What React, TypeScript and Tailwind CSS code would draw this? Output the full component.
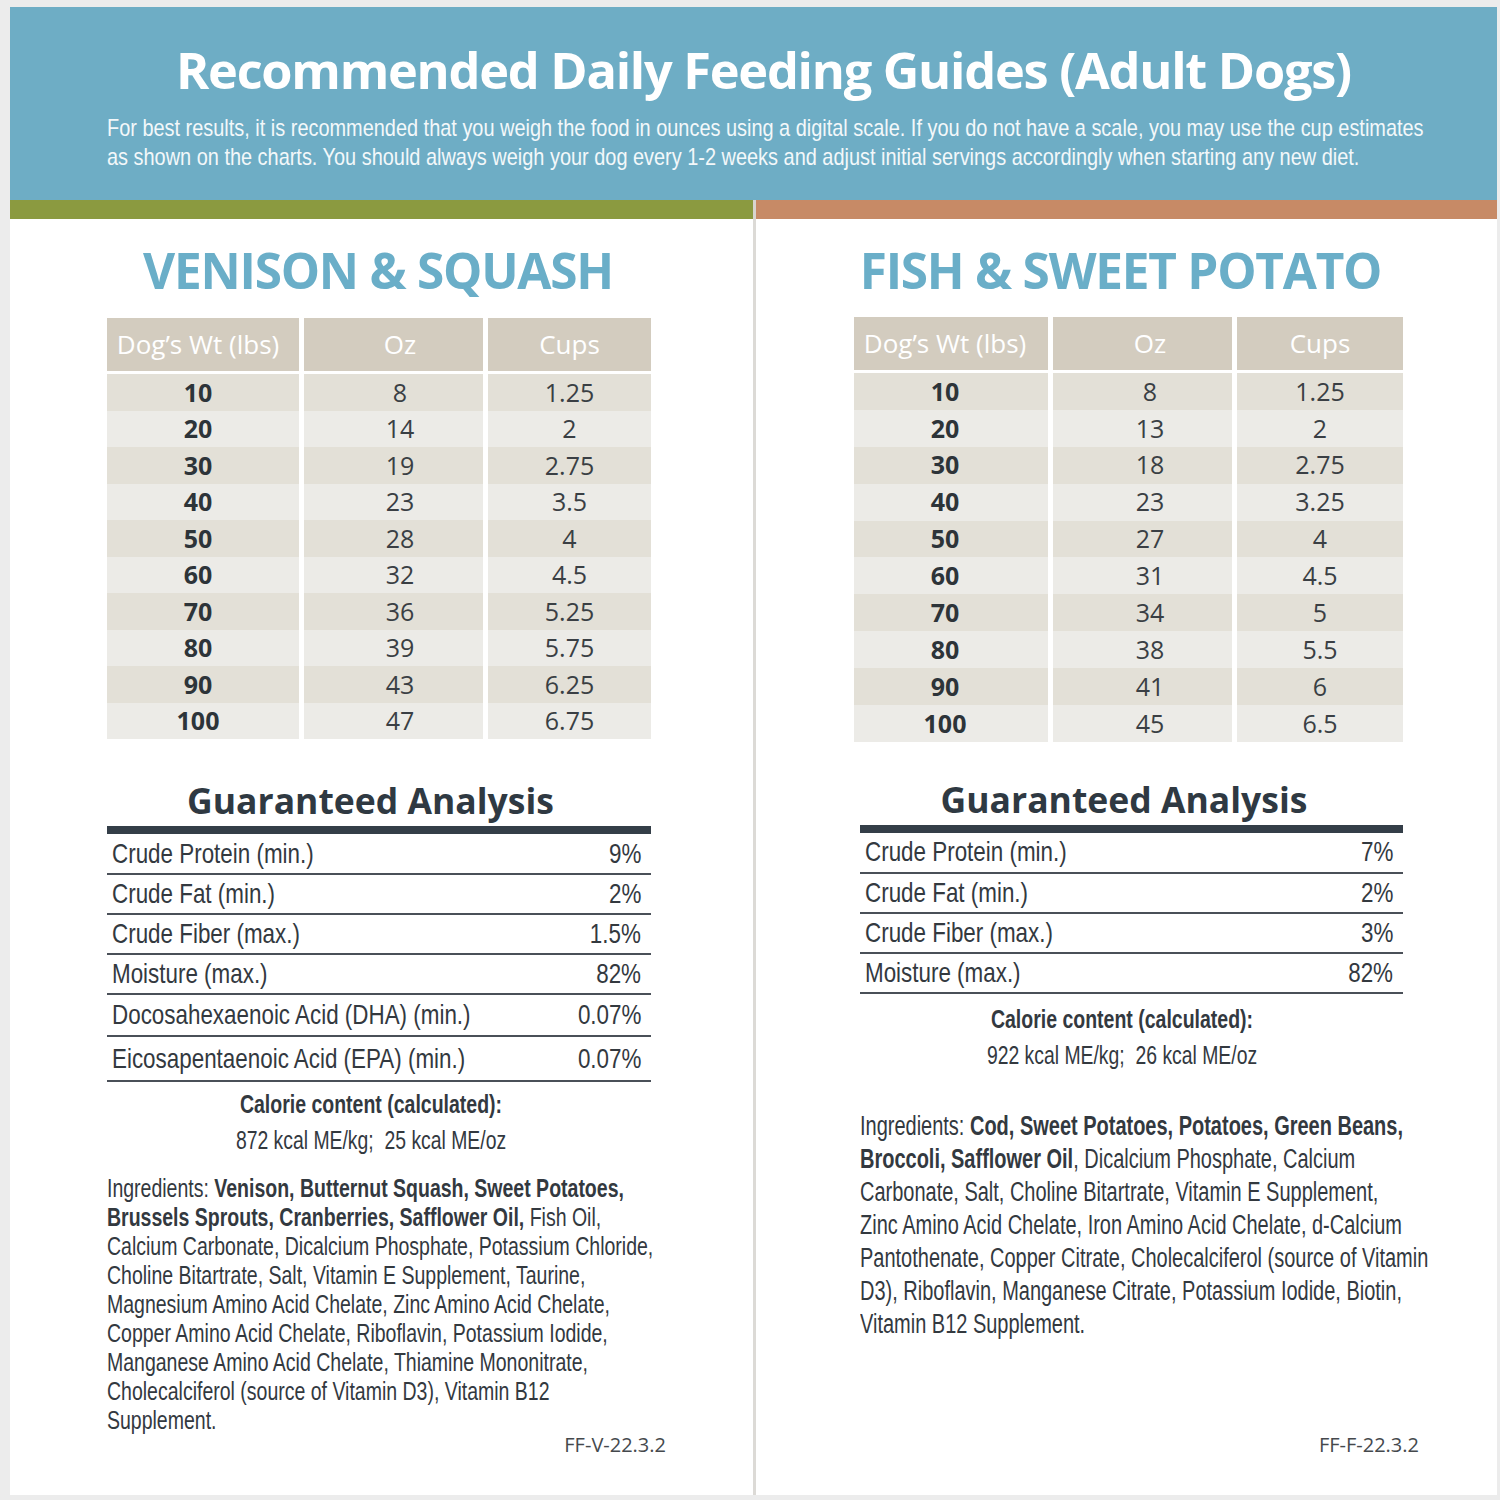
const narrow = "font-['Liberation_Sans',Arial,sans-serif]";
const sans = "font-['Open_Sans',sans-serif]";

type Recipe = {
  title: string;
  rows: [string, string, string][];
  analysis: [string, string][];
  calories: string;
  ingredients: React.ReactNode[];
  code: string;
};

const venison: Recipe = {
  title: "VENISON & SQUASH",
  rows: [
    ["10", "8", "1.25"],
    ["20", "14", "2"],
    ["30", "19", "2.75"],
    ["40", "23", "3.5"],
    ["50", "28", "4"],
    ["60", "32", "4.5"],
    ["70", "36", "5.25"],
    ["80", "39", "5.75"],
    ["90", "43", "6.25"],
    ["100", "47", "6.75"],
  ],
  analysis: [
    ["Crude Protein (min.)", "9%"],
    ["Crude Fat (min.)", "2%"],
    ["Crude Fiber (max.)", "1.5%"],
    ["Moisture (max.)", "82%"],
    ["Docosahexaenoic Acid (DHA) (min.)", "0.07%"],
    ["Eicosapentaenoic Acid (EPA) (min.)", "0.07%"],
  ],
  calories: "872 kcal ME/kg;\u00a0 25 kcal ME/oz",
  ingredients: [
    <>
      Ingredients: <b>Venison, Butternut Squash, Sweet Potatoes,</b>
    </>,
    <>
      <b>Brussels Sprouts, Cranberries, Safflower Oil,</b> Fish Oil,
    </>,
    "Calcium Carbonate, Dicalcium Phosphate, Potassium Chloride,",
    "Choline Bitartrate, Salt, Vitamin E Supplement, Taurine,",
    "Magnesium Amino Acid Chelate, Zinc Amino Acid Chelate,",
    "Copper Amino Acid Chelate, Riboflavin, Potassium Iodide,",
    "Manganese Amino Acid Chelate, Thiamine Mononitrate,",
    "Cholecalciferol (source of Vitamin D3), Vitamin B12",
    "Supplement.",
  ],
  code: "FF-V-22.3.2",
};

const fish: Recipe = {
  title: "FISH & SWEET POTATO",
  rows: [
    ["10", "8", "1.25"],
    ["20", "13", "2"],
    ["30", "18", "2.75"],
    ["40", "23", "3.25"],
    ["50", "27", "4"],
    ["60", "31", "4.5"],
    ["70", "34", "5"],
    ["80", "38", "5.5"],
    ["90", "41", "6"],
    ["100", "45", "6.5"],
  ],
  analysis: [
    ["Crude Protein (min.)", "7%"],
    ["Crude Fat (min.)", "2%"],
    ["Crude Fiber (max.)", "3%"],
    ["Moisture (max.)", "82%"],
  ],
  calories: "922 kcal ME/kg;\u00a0 26 kcal ME/oz",
  ingredients: [
    <>
      Ingredients: <b>Cod, Sweet Potatoes, Potatoes, Green Beans,</b>
    </>,
    <>
      <b>Broccoli, Safflower Oil</b>, Dicalcium Phosphate, Calcium
    </>,
    "Carbonate, Salt, Choline Bitartrate, Vitamin E Supplement,",
    "Zinc Amino Acid Chelate, Iron Amino Acid Chelate, d-Calcium",
    "Pantothenate, Copper Citrate, Cholecalciferol (source of Vitamin",
    "D3), Riboflavin, Manganese Citrate, Potassium Iodide, Biotin,",
    "Vitamin B12 Supplement.",
  ],
  code: "FF-F-22.3.2",
};

const FeedingTable = ({ rows, wide }: { rows: Recipe["rows"]; wide: boolean }) => {
  const cols = wide ? "grid-cols-[194px_179px_166px]" : "grid-cols-[192px_179px_163px]";
  const h = wide ? "h-[36.9px]" : "h-[36.5px]";
  const first = wide ? "pr-[12px]" : "pr-[10px]";
  const second = wide ? "pl-[15px]" : "pl-[13px]";
  return (
    <div className={sans}>
      <div className={`grid ${cols} gap-x-[5px] text-[26px] text-white`}>
        <div className={`flex h-[53px] items-center justify-center bg-[#d3ccbf] ${first}`}>Dog’s Wt (lbs)</div>
        <div className={`flex h-[53px] items-center justify-center bg-[#d3ccbf] ${second}`}>Oz</div>
        <div className="flex h-[53px] items-center justify-center bg-[#d3ccbf]">Cups</div>
      </div>
      <div className={`mt-[3px] grid ${cols} gap-x-[5px] text-[25px] text-[#3a3f44]`}>
        {rows.map((r, i) => {
          const bg = i % 2 === 0 ? "bg-[#e3e0d7]" : "bg-[#ecebe7]";
          return [
            <div
              key={`${i}a`}
              className={`flex ${h} items-center justify-center ${bg} ${first} font-bold text-[#2d3439]`}
            >
              {r[0]}
            </div>,
            <div key={`${i}b`} className={`flex ${h} items-center justify-center ${bg} ${second}`}>
              {r[1]}
            </div>,
            <div key={`${i}c`} className={`flex ${h} items-center justify-center ${bg}`}>
              {r[2]}
            </div>,
          ];
        })}
      </div>
    </div>
  );
};

const RecipeColumn = ({ recipe, right }: { recipe: Recipe; right: boolean }) => {
  return (
    <div className={`flex h-full flex-col ${right ? "pr-[92px] pl-[98px]" : "pr-[92px] pl-[97px]"}`}>
      <h2
        className={`${sans} mt-[27px] text-center text-[49.5px] leading-[48px] font-bold tracking-tight whitespace-nowrap text-[#6aaec8] ${
          right ? "pr-[18px]" : "pr-[12px]"
        }`}
      >
        {recipe.title}
      </h2>
      <div className={right ? "mt-[23px] mr-[-2px]" : "mt-[24px] mr-[10px]"}>
        <FeedingTable rows={recipe.rows} wide={right} />
      </div>

      <div className={right ? "mr-[2px] pl-[6px]" : "mr-[10px]"}>
        <h3
          className={`${sans} ${
            right ? "mt-[35px] pr-[15px]" : "mt-[39px] pr-[17px]"
          } text-center text-[35.5px] leading-[44px] font-bold text-[#2f3942]`}
        >
          Guaranteed Analysis
        </h3>
        <div className="mt-[4px] h-[8px] bg-[#343e48]" />
        <div className={`${narrow} text-[28px] text-[#33393f]`}>
          {recipe.analysis.map(([label, value], i) => (
            <div
              key={label}
              className={`flex items-center justify-between border-b-2 border-[#4a5058] pr-[10px] pl-[5px] ${
                i === 0 ? "h-[41px]" : i === 4 ? "h-[42px]" : i === 5 ? "h-[45px]" : "h-[40px]"
              }`}
            >
              <span className="origin-left scale-x-[0.8] whitespace-nowrap">{label}</span>
              <span className="origin-right scale-x-[0.8] whitespace-nowrap">{value}</span>
            </div>
          ))}
        </div>
        <div
          className={`${narrow} ${
            right ? "mt-[7px] pr-[19px]" : "mt-[4px] pr-[16px]"
          } text-center text-[26px] leading-[36px] whitespace-nowrap text-[#33393f]`}
        >
          <div className="scale-x-[0.75] font-bold">Calorie content (calculated):</div>
          <div className="scale-x-[0.745]">{recipe.calories}</div>
        </div>
      </div>

      <div
        className={`${narrow} ${
          right
            ? "mt-[37px] ml-[6px] scale-x-[0.74] text-[27px] leading-[33px]"
            : "mt-[16px] scale-x-[0.78] text-[25px] leading-[29px]"
        } origin-left text-[#33393f]`}
      >
        {recipe.ingredients.map((line, i) => (
          <div key={i} className="whitespace-nowrap">
            {line}
          </div>
        ))}
      </div>

      <div
        className={`${sans} mt-auto mb-[40px] text-right text-[20px] leading-[20px] text-[#45494d] ${
          right ? "mr-[-14px]" : "mr-[-5px]"
        }`}
      >
        {recipe.code}
      </div>
    </div>
  );
};

const App = () => {
  return (
    <div className="h-[1500px] w-[1500px] overflow-hidden bg-[#ececec] pt-[7px] pr-[3px] pb-[5px] pl-[10px]">
      <div className="flex h-full flex-col bg-white">
        <header className="h-[193px] shrink-0 bg-[#6eadc5] pt-[35px] text-white">
          <h1 className={`${sans} pl-[20px] text-center text-[50.5px] leading-[56px] font-bold tracking-tight`}>
            Recommended Daily Feeding Guides (Adult Dogs)
          </h1>
          <p
            className={`${narrow} mt-[15px] ml-[97px] origin-left scale-x-[0.83] text-[24px] leading-[29px] text-[#f3f8fa]`}
          >
            <span className="block whitespace-nowrap">
              For best results, it is recommended that you weigh the food in ounces using a digital scale. If you do
              not have a scale, you may use the cup estimates
            </span>
            <span className="block whitespace-nowrap">
              as shown on the charts. You should always weigh your dog every 1-2 weeks and adjust initial servings
              accordingly when starting any new diet.
            </span>
          </p>
        </header>
        <div className="flex h-[19px] shrink-0">
          <div className="w-[743px] shrink-0 bg-[#8b9a40]" />
          <div className="w-[3px] shrink-0 bg-[#d8d5cf]" />
          <div className="flex-1 bg-[#c78a66]" />
        </div>
        <div className="flex min-h-0 flex-1">
          <div className="w-[743px] min-w-0 shrink-0">
            <RecipeColumn recipe={venison} right={false} />
          </div>
          <div className="w-[3px] shrink-0 bg-[#dcdad6]" />
          <div className="w-[741px] min-w-0 shrink-0">
            <RecipeColumn recipe={fish} right={true} />
          </div>
        </div>
      </div>
    </div>
  );
};

export default App;
